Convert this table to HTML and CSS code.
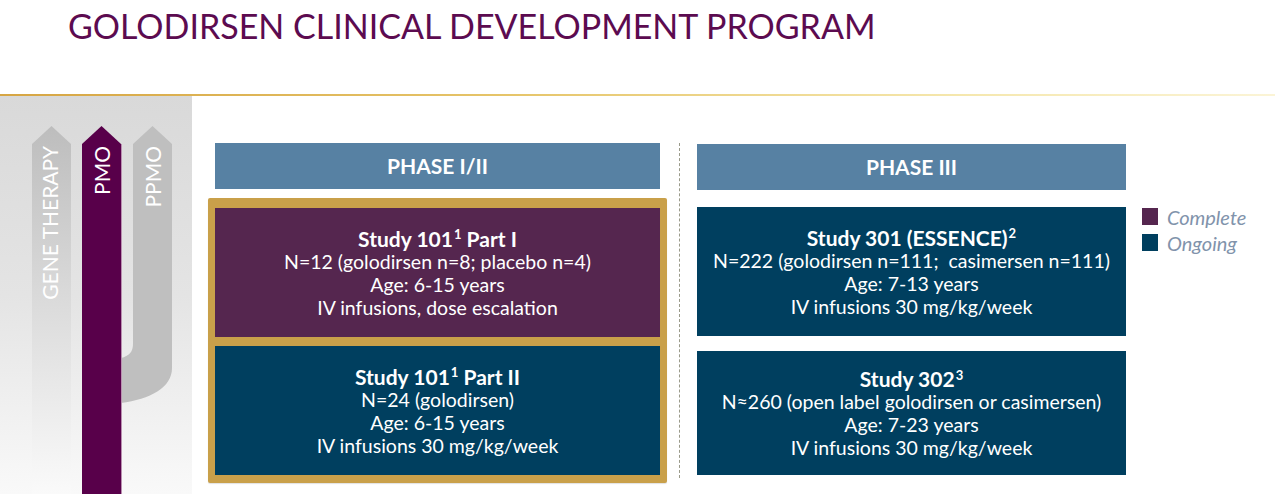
FILE: index.html
```html
<!DOCTYPE html>
<html lang="en">
<head>
<meta charset="utf-8">
<title>Golodirsen Clinical Development Program</title>
<link rel="stylesheet" href="styles.css">
</head>
<body>
<div class="page">
  <header class="title-bar">
    <h1 class="title">GOLODIRSEN CLINICAL DEVELOPMENT PROGRAM</h1>
  </header>
  <div class="rule"></div>
  <main class="main">
    <aside class="sidebar">
      <svg class="tracks" width="192" height="398" viewBox="0 0 192 398" xmlns="http://www.w3.org/2000/svg">
        <defs>
          <linearGradient id="fadeGrey" x1="0" y1="0" x2="0" y2="1">
            <stop offset="0" stop-color="#bdbdbd"/>
            <stop offset="0.45" stop-color="#d9d9d9"/>
            <stop offset="1" stop-color="#fafafa"/>
          </linearGradient>
        </defs>
        <path d="M32,48 L51.5,30 L71,48 L71,398 L32,398 Z" fill="url(#fadeGrey)"/>
        <path d="M133,48 L152.5,30 L172,48 L172,272 C172,292 150,303 121,307 L121,262 C129,260 133,256 133,248 Z" fill="#bfbfbf"/>
        <path d="M82,48 L101.5,30 L121,48 L121,398 L82,398 Z" fill="#58004a"/>
        <line x1="121.5" y1="48" x2="121.5" y2="398" stroke="#b98fb0" stroke-width="1"/>
        <text class="track-label" transform="translate(58,50) rotate(-90)" text-anchor="end">GENE THERAPY</text>
        <text class="track-label" transform="translate(110,50) rotate(-90)" text-anchor="end">PMO</text>
        <text class="track-label" transform="translate(161,50) rotate(-90)" text-anchor="end">PPMO</text>
      </svg>
    </aside>

    <section class="phase phase-early">
      <div class="phase-head">PHASE I/II</div>
      <div class="gold-frame">
        <div class="study complete">
          <p class="study-name">Study 101<sup class="ref">1</sup> Part I</p>
          <p>N=12 (golodirsen n=8; placebo n=4)</p>
          <p>Age: 6-15 years</p>
          <p>IV infusions, dose escalation</p>
        </div>
        <div class="study ongoing">
          <p class="study-name">Study 101<sup class="ref">1</sup> Part II</p>
          <p>N=24 (golodirsen)</p>
          <p>Age: 6-15 years</p>
          <p>IV infusions 30 mg/kg/week</p>
        </div>
      </div>
    </section>

    <div class="divider"></div>

    <section class="phase phase-late">
      <div class="phase-head">PHASE III</div>
      <div class="study ongoing study-301">
        <p class="study-name">Study 301 (ESSENCE)<sup class="ref">2</sup></p>
        <p>N=222 (golodirsen n=111;&nbsp; casimersen n=111)</p>
        <p>Age: 7-13 years</p>
        <p>IV infusions 30 mg/kg/week</p>
      </div>
      <div class="study ongoing study-302">
        <p class="study-name">Study 302<sup class="ref">3</sup></p>
        <p>N≈260 (open label golodirsen or casimersen)</p>
        <p>Age: 7-23 years</p>
        <p>IV infusions 30 mg/kg/week</p>
      </div>
    </section>

    <ul class="legend">
      <li class="legend-item"><span class="swatch swatch-complete"></span>Complete</li>
      <li class="legend-item"><span class="swatch swatch-ongoing"></span>Ongoing</li>
    </ul>
  </main>
</div>
</body>
</html>
```

FILE: styles.css
```css
* { box-sizing: border-box; }

html, body {
  margin: 0;
  padding: 0;
  background: #ffffff;
}

body {
  font-family: Lato, "Open Sans", "Liberation Sans", sans-serif;
  width: 1275px;
  height: 494px;
  overflow: hidden;
}

.page {
  width: 1275px;
  height: 494px;
  display: flex;
  flex-direction: column;
}

.title-bar {
  height: 94px;
  padding-left: 68px;
  padding-top: 5px;
}

.title {
  margin: 0;
  font-family: Lato, "Open Sans", sans-serif;
  font-weight: 400;
  font-size: 34px;
  line-height: 42px;
  color: #5c0b50;
  letter-spacing: 0;
}

.rule {
  height: 2px;
  background: linear-gradient(90deg, #d6a543 0%, #e6c56a 40%, #f5e7ad 75%, #fbf4d6 100%);
}

.main {
  flex: 1;
  display: flex;
  align-items: flex-start;
}

.sidebar {
  width: 192px;
  height: 398px;
  flex: none;
  background: linear-gradient(180deg, #d9d9d9 0%, #e4e4e4 50%, #f9f9f9 100%);
}

.tracks { display: block; }

.track-label {
  font-family: Lato, "Open Sans", sans-serif;
  font-size: 21px;
  fill: #ffffff;
}

.phase { flex: none; }

.phase-head {
  height: 46px;
  line-height: 46px;
  background: #5781a3;
  color: #ffffff;
  text-align: center;
  font-weight: 700;
  font-size: 21px;
}

.phase-early {
  width: 459px;
  margin-left: 16px;
  margin-top: 47px;
}

.phase-early .phase-head {
  margin: 0 7px;
}

.gold-frame {
  margin-top: 9px;
  background: #c9a04a;
  border-radius: 2px;
  padding: 10px 7px 8px;
  display: flex;
  flex-direction: column;
  gap: 9px;
  box-shadow: 0 1px 1px rgba(0, 0, 0, 0.12);
}

.study {
  height: 129px;
  display: flex;
  flex-direction: column;
  justify-content: center;
  align-items: center;
  color: #ffffff;
  font-size: 19.5px;
  line-height: 23px;
  text-align: center;
}

.study p {
  margin: 0;
  white-space: nowrap;
}

.study .study-name {
  font-weight: 700;
  font-size: 21px;
}

.ref {
  font-size: 0.62em;
  line-height: 0;
  vertical-align: 0.55em;
  margin-left: 1px;
}

.complete { background: #55264f; }
.ongoing  { background: #003f5f; }

.divider {
  flex: none;
  width: 0;
  height: 335px;
  margin-left: 12px;
  margin-top: 47px;
  border-left: 1px dashed #9a9a8a;
}

.phase-late {
  width: 429px;
  margin-left: 17px;
  margin-top: 48px;
}

.study-301 {
  margin-top: 17px;
  height: 129px;
}

.study-302 {
  margin-top: 15px;
  height: 124px;
}

.legend {
  list-style: none;
  margin: 112px 0 0 16px;
  padding: 0;
  display: flex;
  flex-direction: column;
  gap: 9px;
}

.legend-item {
  display: flex;
  align-items: center;
  gap: 9px;
  height: 17px;
  font-style: italic;
  font-size: 20px;
  color: #8193ab;
}

.swatch {
  width: 16px;
  height: 17px;
  flex: none;
}

.swatch-complete { background: #55264f; }
.swatch-ongoing  { background: #003f5f; }
```
